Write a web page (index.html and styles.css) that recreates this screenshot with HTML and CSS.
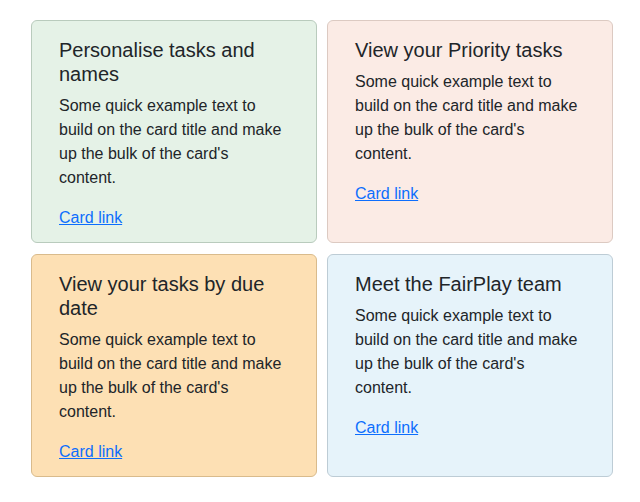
FILE: index.html
```html
<!DOCTYPE html>
<html lang="en">
<head>
<meta charset="utf-8">
<title>Cards</title>
<link rel="stylesheet" href="styles.css">
</head>
<body>
<div class="grid">
  <div class="card green">
    <h5 class="card-title">Personalise tasks and names</h5>
    <p class="card-text">Some quick example text to build on the card title and make up the bulk of the card's content.</p>
    <a href="#" class="card-link">Card link</a>
  </div>
  <div class="card pink">
    <h5 class="card-title">View your Priority tasks</h5>
    <p class="card-text">Some quick example text to build on the card title and make up the bulk of the card's content.</p>
    <a href="#" class="card-link">Card link</a>
  </div>
  <div class="card orange">
    <h5 class="card-title">View your tasks by due date</h5>
    <p class="card-text">Some quick example text to build on the card title and make up the bulk of the card's content.</p>
    <a href="#" class="card-link">Card link</a>
  </div>
  <div class="card blue">
    <h5 class="card-title">Meet the FairPlay team</h5>
    <p class="card-text">Some quick example text to build on the card title and make up the bulk of the card's content.</p>
    <a href="#" class="card-link">Card link</a>
  </div>
</div>
</body>
</html>
```
FILE: styles.css
```css
html, body {
  margin: 0;
  padding: 0;
  background: #ffffff;
}
body {
  font-family: "Liberation Sans", Arial, sans-serif;
  color: #212529;
  font-size: 16px;
  line-height: 1.5;
}
.grid {
  display: grid;
  grid-template-columns: 286px 286px;
  column-gap: 10px;
  row-gap: 11px;
  padding: 20px 0 0 31px;
}
.card {
  border: 1px solid #c6cfc8;
  border-radius: 6px;
  padding: 17px 28px 12px 27px;
}
.card-title {
  margin: 0 0 8px 0;
  font-size: 20px;
  font-weight: 400;
  line-height: 24px;
}
.card-text {
  margin: 0 0 16px 0;
  line-height: 24px;
}
.card-link {
  color: #0d6efd;
  text-decoration: underline;
  line-height: 24px;
}
.green { background: #e5f2e7; border-color: #b9cbbd; }
.pink { background: #fbebe5; border-color: #dccac2; }
.orange { background: #fde0b4; border-color: #d9bb8c; }
.blue { background: #e6f3fa; border-color: #bdccd5; }
```
